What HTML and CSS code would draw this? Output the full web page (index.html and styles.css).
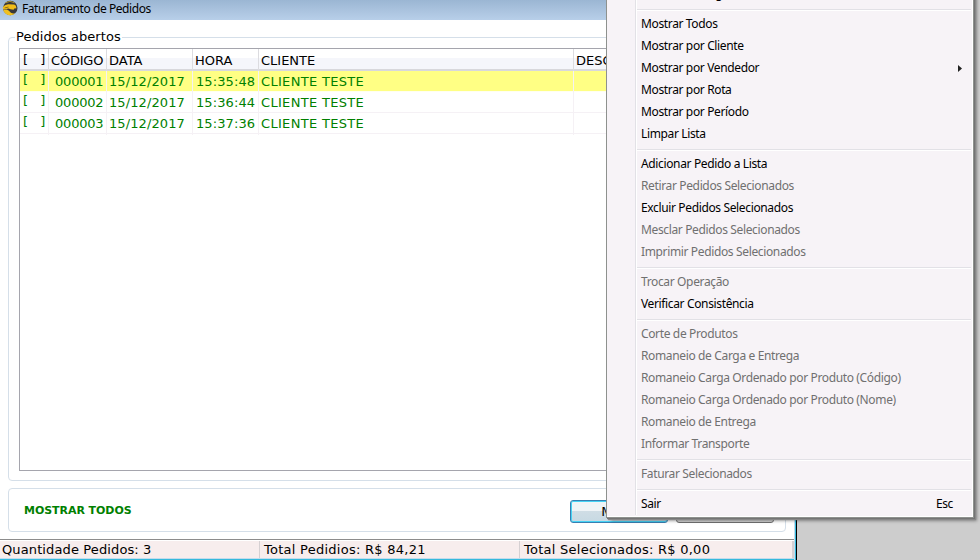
FILE: index.html
```html
<!DOCTYPE html>
<html lang="pt-BR">
<head>
<meta charset="utf-8">
<title>Faturamento de Pedidos</title>
<link rel="stylesheet" href="styles.css">
</head>
<body>
<div class="window">
  <header class="titlebar">
    <svg class="logo" width="16" height="16" viewBox="0 0 16 16">
      <circle cx="8.300" cy="8" r="7.200" fill="#38383a"/>
      <path d="M3.500 2.800Q8 -.2 12.500 2.800" stroke="#a89032" stroke-width="1" fill="none"/>
      <path d="M1.200 9.800A7.200 7.200 0 0 0 13 13.400C9.500 13.800 8.400 12.600 7 10.800L4.800 9.500Z" fill="#f0c020"/>
      <path d="M.8 7.200Q2.500 4.500 6 4.200L12 4.400Q14.700 5.300 14.300 8.600L12.700 8.300 11.500 9.800 8.500 9.300 6.500 8.400 2 9.600Q.6 8.800.8 7.200Z" fill="#f1bd18"/>
      <path d="M2.500 8 6.500 7" stroke="#765d14" stroke-width=".8"/>
    </svg>
    <span class="title">Faturamento de Pedidos</span>
  </header>
  <main class="client">
    <fieldset class="group">
      <legend>Pedidos abertos</legend>
      <div class="grid">
        <div class="row head"><span class="mark">[ ]</span><span class="code">CÓDIGO</span><span>DATA</span><span>HORA</span><span>CLIENTE</span><span>DESCONTO</span></div>
        <div class="row selected"><span class="mark">[ ]</span><span class="num">000001</span><span class="date">15/12/2017</span><span class="hour">15:35:48</span><span class="name">CLIENTE TESTE</span><span></span></div>
        <div class="row"><span class="mark">[ ]</span><span class="num">000002</span><span class="date">15/12/2017</span><span class="hour">15:36:44</span><span class="name">CLIENTE TESTE</span><span></span></div>
        <div class="row"><span class="mark">[ ]</span><span class="num">000003</span><span class="date">15/12/2017</span><span class="hour">15:37:36</span><span class="name">CLIENTE TESTE</span><span></span></div>
      </div>
    </fieldset>
    <section class="actions">
      <strong>MOSTRAR TODOS</strong>
      <div class="buttons"><button class="primary">Menu</button><button></button></div>
    </section>
  </main>
  <footer class="status"><span class="s1">Quantidade Pedidos: 3</span><span class="s2">Total Pedidios: R$ 84,21</span><span class="s3">Total Selecionados: R$ 0,00</span></footer>
</div>
<nav class="menu">
  <div class="items">
    <div class="item cut"><span>Mostrar Código</span></div>
    <hr>
    <div class="item"><span>Mostrar Todos</span></div>
    <div class="item"><span>Mostrar por Cliente</span></div>
    <div class="item"><span>Mostrar por Vendedor</span><svg class="arrow" width="4" height="7" viewBox="0 0 4 7"><path d="M0 0L4 3.500 0 7Z" fill="#222"/></svg></div>
    <div class="item"><span>Mostrar por Rota</span></div>
    <div class="item"><span>Mostrar por Período</span></div>
    <div class="item"><span>Limpar Lista</span></div>
    <hr>
    <div class="item"><span>Adicionar Pedido a Lista</span></div>
    <div class="item off"><span>Retirar Pedidos Selecionados</span></div>
    <div class="item"><span>Excluir Pedidos Selecionados</span></div>
    <div class="item off"><span>Mesclar Pedidos Selecionados</span></div>
    <div class="item off"><span>Imprimir Pedidos Selecionados</span></div>
    <hr>
    <div class="item off"><span>Trocar Operação</span></div>
    <div class="item"><span>Verificar Consistência</span></div>
    <hr>
    <div class="item off"><span>Corte de Produtos</span></div>
    <div class="item off"><span>Romaneio de Carga e Entrega</span></div>
    <div class="item off"><span>Romaneio Carga Ordenado por Produto (Código)</span></div>
    <div class="item off"><span>Romaneio Carga Ordenado por Produto (Nome)</span></div>
    <div class="item off"><span>Romaneio de Entrega</span></div>
    <div class="item off"><span>Informar Transporte</span></div>
    <hr>
    <div class="item off"><span>Faturar Selecionados</span></div>
    <hr>
    <div class="item"><span>Sair</span><span class="key">Esc</span></div>
  </div>
</nav>
</body>
</html>
```
FILE: styles.css
```css
* { box-sizing: border-box; }
body {
  margin: 0;
  width: 980px;
  height: 560px;
  overflow: hidden;
  position: relative;
  background: #cdcdcd;
  font: 13px/20px "DejaVu Sans", Verdana, sans-serif;
  color: #000;
}
.window {
  width: 797px;
  height: 560px;
  display: flex;
  flex-direction: column;
  background: #fff;
  border-right: 1px solid #000;
  box-shadow: inset -1px 0 #35b9dc, inset -2px 0 #c4dcec;
}
.titlebar {
  height: 20px;
  flex: none;
  display: flex;
  align-items: flex-start;
  padding-left: 2px;
  background: linear-gradient(#9bb6d3, #b8cfe9);
}
.title {
  margin-left: 4px;
  font: 12px/18px "Noto Sans", "Segoe UI", sans-serif;
  letter-spacing: -0.44px;
}
.client { flex: 1; padding: 8px 0 0 8px; }
.group {
  margin: 0;
  width: 778px;
  height: 453px;
  padding: 2px 10px 0;
  border: 1px solid #d5dfe9;
  border-radius: 4px;
}
.group legend {
  padding: 0 1px;
  margin-left: -4px;
  height: 18px;
  line-height: 17px;
  letter-spacing: 0.07px;
}
.grid {
  height: 423px;
  border: 1px solid #a5a5ad;
  overflow: hidden;
}
.row {
  height: 21px;
  display: grid;
  grid-template-columns: 29px 58px 86px 66px 315px 1fr;
  color: #008000;
  white-space: nowrap;
  line-height: 22px;
  border-bottom: 1px solid #f5f1f5;
}
.row span { padding-left: 2px; border-right: 1px solid #f5f1f5; }
.row .mark { padding-left: 3px; word-spacing: 8px; line-height: 18px; }
.row .num { padding-left: 6px; letter-spacing: -0.2px; }
.row .date { letter-spacing: 0.1px; }
.row .hour { padding-left: 3px; letter-spacing: 0.1px; }
.row .name { letter-spacing: 0.32px; }
.head {
  height: 22px;
  color: #000;
  background: linear-gradient(#fff 45%, #f5f6fb 45%);
  border-bottom: 2px solid #d8d8dc;
}
.head span { border-right-color: #dcdce0; line-height: 23px; }
.head .code { letter-spacing: -0.2px; }
.head .mark { line-height: 22px; }
.selected { background: #ffff84; border-bottom-color: #fffff0; }
.actions {
  margin-top: 7px;
  width: 778px;
  height: 44px;
  padding: 0 11px 0 15px;
  border: 1px solid #d5dfe9;
  border-radius: 4px;
  display: flex;
  align-items: center;
  justify-content: space-between;
}
.actions strong { color: #008000; font-size: 11px; padding-top: 1px; letter-spacing: -0.05px; }
.buttons { display: flex; gap: 8px; margin-top: 3px; }
button {
  width: 98px;
  height: 23px;
  padding: 0;
  font: 13px "DejaVu Sans", sans-serif;
  border: 1px solid #707070;
  border-radius: 3px;
  background: linear-gradient(#f2f2f2 50%, #d0d0d0);
}
button.primary {
  border-color: #397fb1;
  box-shadow: inset 0 0 0 1px #46d3f5;
  background: linear-gradient(#eff4f7 50%, #cfdde5 50%, #c7d9e3);
}
.status {
  flex: none;
  height: 21px;
  margin-right: 2px;
  display: flex;
  border-top: 1px solid #8c8c8c;
  border-bottom: 1px solid #35b9dc;
  box-shadow: inset 0 -1px #c4dcec, inset 0 1px #fff;
  background: #f7eded;
  white-space: nowrap;
}
.status span { padding-left: 4px; border-right: 1px solid #d5d0d2; margin: 1px 0; line-height: 18px; letter-spacing: 0.26px; }
.status .s1 { width: 260px; padding-left: 2px; letter-spacing: 0.12px; }
.status .s2 { width: 260px; }
.status .s3 { flex: 1; border-right-width: 2px; }
.menu {
  position: absolute;
  left: 606px;
  top: -21px;
  width: 368px;
  height: 539px;
  padding: 3px 2px 2px 28px;
  border: 1px solid #8e918e;
  background: #f7f3f7;
  box-shadow: inset -1px -1px #fff, 1px 1px #747474, 2px 2px 1px #888, 4px 4px 3px -1px rgba(0,0,0,.35);
}
.items { border-left: 1px solid #e2e1e6; box-shadow: inset 1px 0 #fff; padding-left: 1px; }
.item {
  height: 22px;
  display: flex;
  align-items: center;
  justify-content: space-between;
  padding: 0 18px 0 4px;
  font: 12px/22px "Noto Sans", "Segoe UI", sans-serif;
  letter-spacing: -0.36px;
  white-space: nowrap;
}
.cut { letter-spacing: 0.1px; }
.off { color: #707070; }
.arrow { margin-right: -9px; }
.menu hr {
  height: 8px;
  margin: 0;
  border: 0;
  background: linear-gradient(transparent 4px, #e2e1e6 4px 5px, #fff 5px 6px, transparent 6px);
}
```
